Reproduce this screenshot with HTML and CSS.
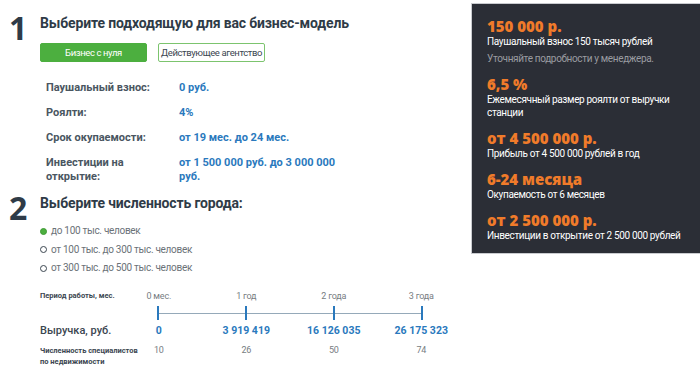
FILE: index.html
```html
<!DOCTYPE html>
<html lang="ru">
<head>
    <meta charset="UTF-8">
    <meta name="viewport" content="width=device-width, initial-scale=1.0">
    <title>Бизнес-модель</title>
    <link rel="stylesheet" href="styles.css">
</head>
<body>
    <div class="page">
        <div class="calc">
            <div class="step">
                <div class="stepNum">1</div>
                <div class="stepBody">
                    <h2 class="stepTitle">Выберите подходящую для вас бизнес-модель</h2>
                    <div class="tabs">
                        <button type="button" class="tab active">Бизнес с нуля</button>
                        <button type="button" class="tab">Действующее агентство</button>
                    </div>
                    <div class="terms">
                        <p class="termName">Паушальный взнос:</p>
                        <p class="termValue">0 руб.</p>
                        <p class="termName">Роялти:</p>
                        <p class="termValue">4%</p>
                        <p class="termName">Срок окупаемости:</p>
                        <p class="termValue">от 19 мес. до 24 мес.</p>
                        <p class="termName">Инвестиции на открытие:</p>
                        <p class="termValue">от 1 500 000 руб. до 3 000 000 руб.</p>
                    </div>
                </div>
            </div>

            <div class="step step2">
                <div class="stepNum">2</div>
                <div class="stepBody">
                    <h2 class="stepTitle">Выберите численность города:</h2>
                    <div class="radios">
                        <label class="radio"><span class="dot checked"></span>до 100 тыс. человек</label>
                        <label class="radio"><span class="dot"></span>от 100 тыс. до 300 тыс. человек</label>
                        <label class="radio"><span class="dot"></span>от 300 тыс. до 500 тыс. человек</label>
                    </div>
                </div>
            </div>

            <div class="timeline">
                <p class="tlName small">Период работы, мес.</p>
                <p class="tlPeriod">0 мес.</p>
                <p class="tlPeriod">1 год</p>
                <p class="tlPeriod">2 года</p>
                <p class="tlPeriod">3 года</p>

                <div class="track">
                    <span class="tick"></span>
                    <span class="tick"></span>
                    <span class="tick"></span>
                    <span class="tick"></span>
                </div>

                <p class="tlName big">Выручка, руб.</p>
                <p class="tlMoney">0</p>
                <p class="tlMoney">3 919 419</p>
                <p class="tlMoney">16 126 035</p>
                <p class="tlMoney">26 175 323</p>

                <p class="tlName small count">Численность специалистов<br>по недвижимости</p>
                <p class="tlCount">10</p>
                <p class="tlCount">26</p>
                <p class="tlCount">50</p>
                <p class="tlCount">74</p>
            </div>
        </div>

        <div class="summary">
            <div class="sumItem">
                <p class="sumBig">150 000 р.</p>
                <p class="sumText">Паушальный взнос 150 тысяч рублей</p>
                <p class="sumNote">Уточняйте подробности у менеджера.</p>
            </div>
            <div class="sumItem">
                <p class="sumBig">6,5 %</p>
                <p class="sumText">Ежемесячный размер роялти от выручки<br>станции</p>
            </div>
            <div class="sumItem">
                <p class="sumBig">от 4 500 000 р.</p>
                <p class="sumText">Прибыль от 4 500 000 рублей в год</p>
            </div>
            <div class="sumItem">
                <p class="sumBig">6-24 месяца</p>
                <p class="sumText">Окупаемость от 6 месяцев</p>
            </div>
            <div class="sumItem">
                <p class="sumBig">от 2 500 000 р.</p>
                <p class="sumText">Инвестиции в открытие от 2 500 000 рублей</p>
            </div>
        </div>
    </div>
</body>
</html>
```

FILE: styles.css
```css
body {
        margin: 0;
        background-color: #ffffff;
        font-family: Roboto, "Open Sans", sans-serif;
        color: #3b4650;
        overflow: hidden;
}

p {
        margin: 0;
}

.page {
        display: flex;
        align-items: flex-start;
}

.calc {
        width: 462px;
        padding: 10px 0 0 9px;
}

/* steps */

.step {
        display: flex;
}

.stepNum {
        width: 31px;
        font-family: "Open Sans", sans-serif;
        font-size: 32px;
        font-weight: 700;
        line-height: 36px;
        color: #2f3b47;
}

.stepTitle {
        margin: 4px 0 0 0;
        font-size: 14px;
        font-weight: 700;
        line-height: 18px;
        letter-spacing: -0.15px;
        color: #2f3b47;
}

.tabs {
        display: flex;
        gap: 11px;
        margin-top: 11px;
}

.tab {
        width: 107px;
        height: 19px;
        padding: 0;
        border: 1px solid #7cc46e;
        border-radius: 2px;
        background-color: #ffffff;
        font-family: Roboto, sans-serif;
        font-size: 9.5px;
        letter-spacing: -0.4px;
        white-space: nowrap;
        color: #3b4650;
}

.tab.active {
        background-color: #4caf3f;
        border-color: #4caf3f;
        color: #ffffff;
}

.terms {
        display: grid;
        grid-template-columns: 133px 160px;
        row-gap: 11px;
        margin: 19px 0 0 6px;
        font-size: 11px;
        font-weight: 700;
        line-height: 14px;
}

.termName {
        color: #4a5661;
}

.termValue {
        color: #2a79bd;
}

.step2 {
        margin-top: 6px;
}

.radios {
        display: flex;
        flex-direction: column;
        gap: 4.5px;
        margin-top: 12px;
}

.radio {
        display: flex;
        align-items: center;
        gap: 4px;
        font-size: 10px;
        line-height: 14px;
        letter-spacing: -0.3px;
        color: #6b7278;
}

.dot {
        width: 5px;
        height: 5px;
        border: 1.5px solid #3b4650;
        border-radius: 50%;
}

.dot.checked {
        background-color: #4caf3f;
        border-color: #3f9a34;
}

/* timeline */

.timeline {
        display: grid;
        grid-template-columns: 75px repeat(4, 87.5px);
        align-items: center;
        margin: 15px 0 0 31px;
}

.tlName {
        color: #3b4650;
        font-weight: 700;
        white-space: nowrap;
}

.tlName.small {
        font-size: 7.5px;
        line-height: 12px;
}

.tlName.count {
        margin-top: 6px;
        line-height: 11px;
}

.tlName.big {
        font-size: 11px;
        line-height: 16px;
        font-weight: 500;
}

.tlPeriod,
.tlCount {
        text-align: center;
        font-size: 9px;
        letter-spacing: -0.2px;
        color: #777d82;
}

.tlCount {
        align-self: start;
        margin-top: 6px;
        line-height: 11px;
}

.tlMoney {
        text-align: center;
        font-size: 10.5px;
        font-weight: 700;
        line-height: 16px;
        color: #2a79bd;
}

.track {
        grid-column: 2 / 6;
        display: flex;
        justify-content: space-between;
        height: 14px;
        margin: 4px 43px 3px 43px;
        background: linear-gradient(#95a9b9, #95a9b9) center / 100% 1px no-repeat;
}

.tick {
        width: 2px;
        background-color: #2a79bd;
}

.tick:first-child {
        margin-left: -1px;
}

.tick:last-child {
        margin-right: -1px;
}

/* summary panel */

.summary {
        flex: 1;
        margin-top: 3px;
        padding: 13px 8px 11px 15px;
        background-color: #2b2e36;
        border: 1px solid #c9cbcf;
        border-right: none;
        display: flex;
        flex-direction: column;
        gap: 10px;
}

.sumBig {
        font-family: "Open Sans", sans-serif;
        font-size: 15px;
        font-weight: 800;
        line-height: 18px;
        color: #f07b2a;
}

.sumText {
        font-size: 10px;
        line-height: 13px;
        letter-spacing: -0.35px;
        color: #ffffff;
}

.sumNote {
        margin-top: 4px;
        font-size: 10px;
        line-height: 13px;
        letter-spacing: -0.35px;
        color: #9a9ca1;
}
```
